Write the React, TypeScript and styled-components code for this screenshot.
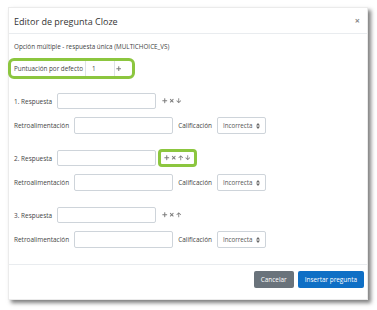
import { createGlobalStyle, styled } from 'styled-components'
import { FaPlus, FaTimes, FaArrowUp, FaArrowDown } from 'react-icons/fa'

const GlobalStyle = createGlobalStyle`
    html, body {
        margin: 0;
        padding: 0;
        background: #fff;
    }
    body {
        font-family: "Open Sans", "Noto Sans", Arial, sans-serif;
        color: #373a3c;
    }
`

type Answer = {
    n: number
    up: boolean
    down: boolean
    highlight?: boolean
}

const answers: Answer[] = [
    { n: 1, up: false, down: true },
    { n: 2, up: true, down: true, highlight: true },
    { n: 3, up: true, down: false },
]

function Tools({ up, down }: { up?: boolean; down?: boolean }) {
    return (
        <>
            <FaPlus />
            <FaTimes />
            {up && <FaArrowUp />}
            {down && <FaArrowDown />}
        </>
    )
}

export default function App() {
    return (
        <Page>
            <GlobalStyle />
            <Dialog>
                <Header>
                    <Title>Editor de pregunta Cloze</Title>
                    <Close>×</Close>
                </Header>
                <Body>
                    <Subtitle>Opción múltiple - respuesta única (MULTICHOICE_VS)</Subtitle>
                    <GradeRow>
                        <GradeLabel>Puntuación por defecto</GradeLabel>
                        <GradeInput>1</GradeInput>
                        <IconSet><FaPlus /></IconSet>
                    </GradeRow>
                    <Answers>
                        {answers.map((a) => (
                            <Group key={a.n}>
                                <Row>
                                    <Label>{a.n}. Respuesta</Label>
                                    <TextBox $w={99} $h={16} />
                                    <IconSet $highlight={a.highlight}>
                                        <Tools up={a.up} down={a.down} />
                                    </IconSet>
                                </Row>
                                <Row>
                                    <Label>Retroalimentación</Label>
                                    <TextBox $w={99} $h={17} />
                                    <Label>Calificación</Label>
                                    <Select>
                                        Incorrecta
                                        <svg width="4" height="6" viewBox="0 0 4 6">
                                            <path d="M0 2.4 L2 0 L4 2.4 Z M0 3.6 L2 6 L4 3.6 Z" fill="#666" />
                                        </svg>
                                    </Select>
                                </Row>
                            </Group>
                        ))}
                    </Answers>
                </Body>
                <Footer>
                    <Button $variant="secondary">Cancelar</Button>
                    <Button $variant="primary">Insertar pregunta</Button>
                </Footer>
            </Dialog>
        </Page>
    )
}

const Page = styled.div`
    padding: 7px 0 0 8px;
    width: 377px;
    height: 310px;
    box-sizing: border-box;
`

const Dialog = styled.div`
    width: 360px;
    height: 293px;
    box-sizing: border-box;
    background: #fff;
    border: 1px solid rgba(0, 0, 0, 0.08);
    box-shadow: 3px 3px 4px rgba(0, 0, 0, 0.5);
    display: flex;
    flex-direction: column;
`

const Header = styled.div`
    height: 25px;
    border-bottom: 1px solid #e9ecef;
    display: flex;
    align-items: center;
    justify-content: space-between;
    padding: 0 7px 0 5px;
    flex-shrink: 0;
`

const Title = styled.div`
    font-size: 9px;
    color: #333;
    padding-top: 1px;
`

const Close = styled.div`
    font-size: 9px;
    font-weight: 700;
    color: #888;
    line-height: 1;
`

const Body = styled.div`
    flex: 1;
    padding: 0 5px;
`

const Subtitle = styled.div`
    margin-top: 8px;
    font-size: 6.3px;
    line-height: 10px;
    color: #444;
`

const GradeRow = styled.div`
    margin-top: 9px;
    margin-left: -3px;
    height: 15px;
    width: 121px;
    box-sizing: border-box;
    display: flex;
    align-items: center;
    padding-left: 3px;
    outline: 3px solid #8cc63f;
    outline-offset: 0;
    border-radius: 3px;
`

const GradeLabel = styled.div`
    font-size: 6.3px;
    color: #444;
    height: 100%;
    display: flex;
    align-items: center;
    padding-right: 2px;
`

const GradeInput = styled.div`
    width: 30px;
    height: 15px;
    box-sizing: border-box;
    border-left: 1px solid #dee2e6;
    border-right: 1px solid #dee2e6;
    font-size: 6.3px;
    display: flex;
    align-items: center;
    padding-left: 6px;
    color: #444;
`

const Answers = styled.div`
    margin-top: 17px;
    display: flex;
    flex-direction: column;
    gap: 16px;
`

const Group = styled.div`
    display: flex;
    flex-direction: column;
    gap: 8px;
`

const Row = styled.div`
    display: flex;
    align-items: center;
    gap: 5px;
`

const Label = styled.div`
    font-size: 6.45px;
    color: #444;
    white-space: nowrap;
`

const TextBox = styled.div<{ $w: number; $h: number }>`
    width: ${(p) => p.$w}px;
    height: ${(p) => p.$h}px;
    box-sizing: border-box;
    border: 1px solid #ced4da;
    border-radius: 2px;
    background: #fff;
`

const IconSet = styled.div<{ $highlight?: boolean }>`
    display: flex;
    align-items: center;
    gap: 1.5px;
    color: #7d7d7d;
    margin-left: ${(p) => (p.$highlight ? '-3px' : '-2px')};
    padding: ${(p) => (p.$highlight ? '5px 3px' : '0 3px')};
    border: ${(p) => (p.$highlight ? '3px solid #8cc63f' : 'none')};
    border-radius: 4px;
    margin-top: ${(p) => (p.$highlight ? '-1px' : '0')};
    margin-bottom: ${(p) => (p.$highlight ? '-1px' : '0')};
    height: ${(p) => (p.$highlight ? '18px' : 'auto')};
    box-sizing: border-box;
    svg {
        width: 5.5px;
        height: 5.5px;
    }
`

const Select = styled.div`
    width: 49px;
    height: 17px;
    box-sizing: border-box;
    border: 1px solid #ced4da;
    border-radius: 2px;
    display: flex;
    align-items: center;
    justify-content: space-between;
    padding: 0 5px 0 5px;
    font-size: 6.2px;
    color: #555;
`

const Footer = styled.div`
    height: 28px;
    border-top: 1px solid #e9ecef;
    display: flex;
    justify-content: flex-end;
    align-items: flex-start;
    gap: 4px;
    padding: 6px 3px 0 0;
    flex-shrink: 0;
`

const Button = styled.div<{ $variant: 'primary' | 'secondary' }>`
    height: 17px;
    padding: 0 7px;
    display: flex;
    align-items: center;
    font-size: 6.4px;
    color: #fff;
    border-radius: 2px;
    background: ${(p) => (p.$variant === 'primary' ? '#0f6fc5' : '#6a737b')};
`
